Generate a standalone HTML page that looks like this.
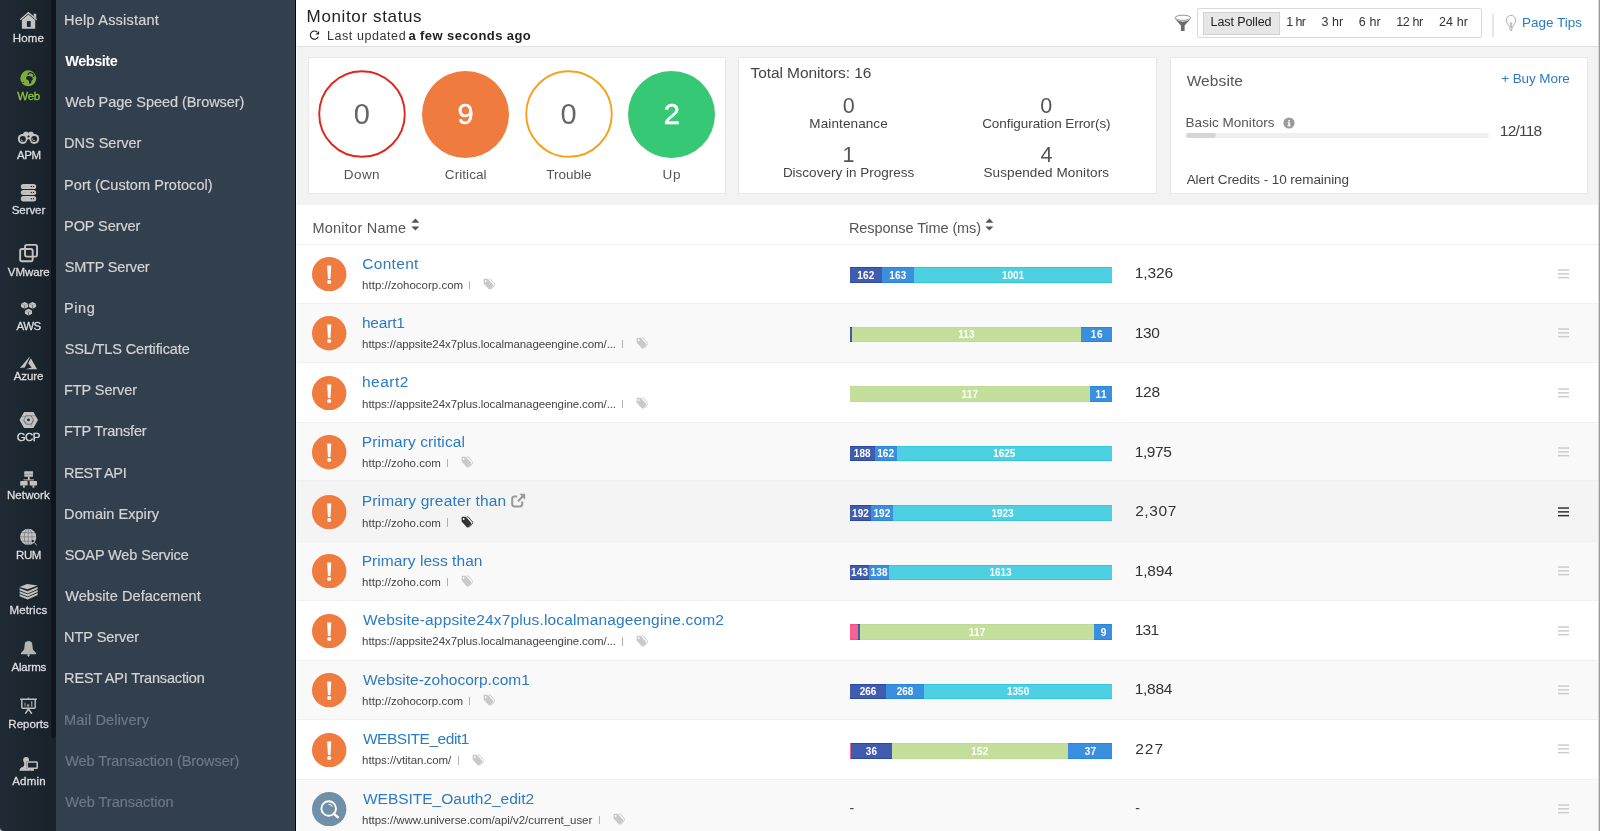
<!DOCTYPE html>
<html lang="en">
<head>
<meta charset="utf-8">
<title>Monitor status</title>
<style>
*{box-sizing:border-box;margin:0;padding:0}
html,body{width:1600px;height:831px;overflow:hidden;background:#f2f2f2}
body{font-family:"Liberation Sans",sans-serif;color:#444;position:relative}
.abs{position:absolute}
.t{position:absolute;white-space:nowrap;line-height:1}
#bar{will-change:transform;position:absolute;left:0;top:0;width:56px;height:831px;background:linear-gradient(90deg,#212b35 0,#1c262f 45%,#19222a 100%);overflow:hidden}
#bar .scroll{position:absolute;left:50.5px;top:0;width:5.5px;height:738px;background:#0f151a;border-radius:0 0 3px 3px}
#nav{will-change:transform;position:absolute;left:56px;top:0;width:240px;height:831px;background:#323f4c;overflow:hidden;border-right:1px solid #000}
#nav:after{content:'';position:absolute;left:238px;top:0;width:1px;height:831px;background:#384858}
#main{will-change:transform;position:absolute;left:296px;top:0;width:1304px;height:831px;background:#f3f3f3;overflow:hidden}
#lb{position:absolute;left:296px;top:0;width:1px;height:831px;background:#fbfbfb}
#corner{position:absolute;left:0;top:827px;width:4px;height:4px;background:radial-gradient(circle at 100% 0,rgba(190,190,190,0) 3.600px,#b8b8b8 4.600px)}
#hdr{position:absolute;left:0;top:0;width:1304px;height:47px;background:#fff;border-bottom:1px solid #e2e1e1}
.card{position:absolute;background:#fff;border:1px solid #e8e8e8;top:57px;height:137px}
#tbl{position:absolute;left:0;top:205px;width:1303px;height:626px;background:#fff}
.row{position:absolute;left:0;width:1303px;border-top:1px solid #f0f0f0}
.row.alt{background:#f9f9f9}
.row.hov{background:#f4f4f4;border-top-color:#f1f1f1;margin-top:-1px;padding-bottom:1px;box-sizing:content-box}
#edge{position:absolute;left:1598px;top:0;width:2px;height:831px;background:linear-gradient(90deg,#d9d9d9 0,#d9d9d9 50%,#9b9b9b 50%)}
</style>
</head>
<body>
<div id="bar">
<div class="scroll"></div>
<svg class="abs" style="left:0;top:0" width="56" height="831" viewBox="0 0 56 831" fill="#c2c2c2" stroke="none">
<g><path d="M20.300 19.800 L28.400 12.700 L36.700 19.800" fill="none" stroke="#c2c2c2" stroke-width="1.300"/><path d="M33.600 13.800h2.600v4.600l-2.600-2.300z"/><path d="M21.900 20.100 L28.400 14.400 L35.200 20.100 V28.800 H21.900 Z"/><rect x="26.900" y="21.100" width="3.800" height="5.800" fill="#1c262f"/></g>
<g><circle cx="28.300" cy="78.300" r="8" fill="#7dad3b"/><path fill="#1c262f" d="M26.100 77.600c.4-1 1.500-1.600 2.800-1.500l2.300.3 1.500 1.300.2 1.700-1.300 1.200-.4 1.900-1.100 1.500-.900-.400-.200-2.100-.800-1.500-1.700-.500z"/><path fill="none" stroke="#1c262f" stroke-width="1.100" d="M27.700 74.800c.7-1.500 2-2.400 3.500-2.400M31.300 72.700l2 1.300.9 1.800-1.100 1"/><circle cx="23.200" cy="82.400" r="0.700" fill="#1c262f"/></g>
<g><path d="M24.600 131.800h2.700l1.200 1 1.200-1h2.700l2.800 3.500v4h-13.400v-4z"/><circle cx="22.800" cy="138.900" r="5"/><circle cx="34.200" cy="138.900" r="5"/><circle cx="22.800" cy="138.900" r="3" fill="#1c262f"/><circle cx="34.200" cy="138.900" r="3" fill="#1c262f"/><path d="M20.900 139.300a2 2 0 0 0 2.300 1.700M32.300 138.300a2 2 0 0 0 2.800 2.200" fill="none" stroke="#c2c2c2" stroke-width=".8"/><path d="M26.500 141.600l2-2.600 2 2.600v2.800h-4z" fill="#1c262f"/><circle cx="28.450" cy="136.500" r="1.100" fill="#1c262f"/></g>
<rect x="20.800" y="183.9" width="15.400" height="5.2" rx="2.600"/><circle cx="33.500" cy="186.50" r="0.700" fill="#1c262f"/><circle cx="31.300" cy="186.50" r="0.700" fill="#1c262f"/><rect x="22.400" y="186.15" width="3.700" height="0.700" fill="#aeaeae"/>
<rect x="20.800" y="190.0" width="15.400" height="5.0" rx="2.600"/><circle cx="33.500" cy="192.50" r="0.700" fill="#1c262f"/><circle cx="31.300" cy="192.50" r="0.700" fill="#1c262f"/><rect x="22.400" y="192.15" width="3.700" height="0.700" fill="#aeaeae"/>
<rect x="20.800" y="196.0" width="15.400" height="5.4" rx="2.600"/><circle cx="33.500" cy="198.70" r="0.700" fill="#1c262f"/><circle cx="31.300" cy="198.70" r="0.700" fill="#1c262f"/><rect x="22.400" y="198.35" width="3.700" height="0.700" fill="#aeaeae"/>
<g fill="none" stroke="#c2c2c2" stroke-width="1.900"><rect x="25.050" y="244.850" width="12" height="11.800" rx="1.800"/><rect x="20.150" y="249.050" width="12.500" height="12.200" rx="1.800"/></g>
<g><path d="M24.6 302.10l3.55 1.6v3.4l-3.55 1.6l-3.55 -1.6v-3.4z"/><path d="M24.6 305.30v3.4" fill="none" stroke="#1c262f" stroke-width="0.600" opacity=".8"/><path d="M21.05 303.70l3.55 1.6l3.55 -1.6" fill="none" stroke="#1c262f" stroke-width="0.500" opacity=".45"/><path d="M32.5 302.10l3.55 1.6v3.4l-3.55 1.6l-3.55 -1.6v-3.4z"/><path d="M32.5 305.30v3.4" fill="none" stroke="#1c262f" stroke-width="0.600" opacity=".8"/><path d="M28.95 303.70l3.55 1.6l3.55 -1.6" fill="none" stroke="#1c262f" stroke-width="0.500" opacity=".45"/><path d="M28.5 308.80l3.55 1.6v3.4l-3.55 1.6l-3.55 -1.6v-3.4z"/><path d="M28.5 312.00v3.4" fill="none" stroke="#1c262f" stroke-width="0.600" opacity=".8"/><path d="M24.95 310.40l3.55 1.6l3.55 -1.6" fill="none" stroke="#1c262f" stroke-width="0.500" opacity=".45"/></g>
<g><path d="M30 356.200 L19.900 368 L24.800 367.400 L29 359 Z"/><path d="M30.900 358.200 L37.100 369.300 L25.500 369.300 L31.600 367.600 L28.200 363.200 Z"/></g>
<g><path d="M19.500 420 L24.100 411.900 H33.400 L38 420 L33.400 428.100 H24.100 Z"/><path d="M23.800 420 L26.200 415.800 H31.100 L33.500 420 L31.100 424.200 H26.200 Z" fill="none" stroke="#1c262f" stroke-width="0.600" opacity=".8"/><path d="M26.200 415.800L22 417M31.100 415.800h5M33.500 420l-2.500 6.500M26.200 424.200l-3.200-4" stroke="#1c262f" stroke-width="0.500" opacity=".6"/><circle cx="28.500" cy="419.900" r="1.400" fill="#1c262f"/></g>
<g><rect x="24.250" y="471.200" width="8.800" height="5.500" rx="0.600"/><rect x="24.250" y="473.900" width="8.800" height="0.500" fill="#1c262f" opacity=".6"/><rect x="27.900" y="476.600" width="1.800" height="3.200"/><rect x="23.500" y="479.400" width="10.400" height="1"/><rect x="20.200" y="480.900" width="7.400" height="4.700" rx="0.600"/><rect x="29.700" y="480.900" width="7.300" height="4.700" rx="0.600"/><rect x="23" y="485.500" width="1.800" height="2.200"/><rect x="32.500" y="485.500" width="1.800" height="2.200"/></g>
<g><circle cx="28.200" cy="536.900" r="8.100"/><g fill="none" stroke="#1c262f" stroke-width="0.600" opacity=".55"><ellipse cx="28.200" cy="536.900" rx="3.900" ry="8.100"/><path d="M28.200 528.800v16.200M20.100 536.900h16.200M21.500 532.600h13.400M21.500 541.200h13.400"/></g><circle cx="32.700" cy="541" r="1.700" fill="#1c262f" stroke="#c2c2c2" stroke-width="0.900"/><path d="M34.200 542.600l2.600 2.600" stroke="#c2c2c2" stroke-width="1" fill="none"/></g>
<g><path d="M19.600 586.900 L27 583.900 L37.700 585.500 L27.600 589.200 Z"/><path d="M19.600 588.2 L27.600 591.3 L37.700 587.1 L37.700 589.1 L27.600 593.4 L19.600 590.2 Z"/><path d="M19.600 591.2 L27.600 594.3 L37.700 590.1 L37.700 592.1 L27.600 596.4 L19.600 593.2 Z"/><path d="M19.600 594.2 L27.600 597.3 L37.700 593.1 L37.700 595.1 L27.600 599.4 L19.600 596.2 Z"/></g>
<g><path d="M28.600 641c1.800 0 3.400.9 3.600 2.600l.5 4.600c.2 1.700 1.300 2.600 3.400 4.700v1.400H20.900v-1.400c2.100-2.100 3.200-3 3.400-4.700l.5-4.600c.2-1.700 1.800-2.600 3.800-2.600z" fill="#b4b4b4"/><path d="M26.700 654.600h3.500l-1.750 2.300z"/></g>
<g><rect x="20.200" y="698.500" width="16.600" height="1.500"/><rect x="27.700" y="697.700" width="1.400" height="1"/><path d="M21.800 699.800v7.400c0 .7.500 1.100 1.100 1.100h11.200c.6 0 1.100-.4 1.100-1.100v-7.400" fill="none" stroke="#c2c2c2" stroke-width="1.400"/><rect x="24.400" y="702.600" width="1.300" height="4" opacity=".6"/><rect x="27" y="704.400" width="2.200" height="2.300" opacity=".8"/><rect x="31" y="701.300" width="1.400" height="5.400" opacity=".7"/><path d="M28.400 709l-3.100 4.700M28.400 709l3.400 4.700" stroke="#c2c2c2" stroke-width="1.500" fill="none"/></g>
<g><ellipse cx="26.100" cy="760" rx="2.900" ry="3.100"/><path d="M24.200 761.500h3.800v3.500c0 1 .8 1.700 2.200 2.200v3.600H19.500c0-2.200 1.300-3.300 3.100-3.900 1.200-.4 1.600-1 1.600-1.900z"/><rect x="26.400" y="761.200" width="11.600" height="7.800" rx="1" fill="#1c262f"/><rect x="27.150" y="761.950" width="10.100" height="6.300" rx="0.800" fill="none" stroke="#c2c2c2" stroke-width="1.500"/><rect x="30.200" y="768.800" width="3.700" height="2"/></g>
</svg>
<div class="t" style="left:12.76px;top:33px;font-size:11.5px;letter-spacing:0.126px;color:#dcdee0;-webkit-text-stroke:0.3px #dcdee0">Home</div>
<div class="t" style="left:17.25px;top:91px;font-size:11.5px;letter-spacing:-0.260px;color:#8cc540;-webkit-text-stroke:0.3px #8cc540">Web</div>
<div class="t" style="left:16.98px;top:150px;font-size:11.5px;letter-spacing:-0.377px;color:#dcdee0;-webkit-text-stroke:0.3px #dcdee0">APM</div>
<div class="t" style="left:11.78px;top:205px;font-size:11.5px;letter-spacing:-0.073px;color:#dcdee0;-webkit-text-stroke:0.3px #dcdee0">Server</div>
<div class="t" style="left:7.85px;top:267px;font-size:11.5px;letter-spacing:-0.084px;color:#dcdee0;-webkit-text-stroke:0.3px #dcdee0">VMware</div>
<div class="t" style="left:16.58px;top:321px;font-size:11.5px;letter-spacing:-0.575px;color:#dcdee0;-webkit-text-stroke:0.3px #dcdee0">AWS</div>
<div class="t" style="left:13.68px;top:371px;font-size:11.5px;letter-spacing:-0.052px;color:#dcdee0;-webkit-text-stroke:0.3px #dcdee0">Azure</div>
<div class="t" style="left:16.73px;top:432px;font-size:11.5px;letter-spacing:-0.575px;color:#dcdee0;-webkit-text-stroke:0.3px #dcdee0">GCP</div>
<div class="t" style="left:6.96px;top:490px;font-size:11.5px;letter-spacing:0.106px;color:#dcdee0;-webkit-text-stroke:0.3px #dcdee0">Network</div>
<div class="t" style="left:16.06px;top:550px;font-size:11.5px;letter-spacing:-0.450px;color:#dcdee0;-webkit-text-stroke:0.3px #dcdee0">RUM</div>
<div class="t" style="left:9.46px;top:605px;font-size:11.5px;letter-spacing:0.134px;color:#dcdee0;-webkit-text-stroke:0.3px #dcdee0">Metrics</div>
<div class="t" style="left:11.48px;top:662px;font-size:11.5px;letter-spacing:-0.188px;color:#dcdee0;-webkit-text-stroke:0.3px #dcdee0">Alarms</div>
<div class="t" style="left:8.36px;top:719px;font-size:11.5px;letter-spacing:0.016px;color:#dcdee0;-webkit-text-stroke:0.3px #dcdee0">Reports</div>
<div class="t" style="left:12.18px;top:776px;font-size:11.5px;letter-spacing:0.217px;color:#dcdee0;-webkit-text-stroke:0.3px #dcdee0">Admin</div>
</div>
<div id="nav">
<div class="t" style="left:8.11px;top:13px;font-size:14.5px;letter-spacing:0.216px;color:#d3d4d5;-webkit-text-stroke:0.2px #d3d4d5">Help Assistant</div>
<div class="t" style="left:9.29px;top:54px;font-size:14.5px;letter-spacing:-0.471px;color:#ffffff;font-weight:bold">Website</div>
<div class="t" style="left:9.24px;top:95px;font-size:14.5px;letter-spacing:-0.048px;color:#d3d4d5;-webkit-text-stroke:0.2px #d3d4d5">Web Page Speed (Browser)</div>
<div class="t" style="left:8.11px;top:136px;font-size:14.5px;letter-spacing:-0.015px;color:#d3d4d5;-webkit-text-stroke:0.2px #d3d4d5">DNS Server</div>
<div class="t" style="left:8.11px;top:178px;font-size:14.5px;letter-spacing:0.049px;color:#d3d4d5;-webkit-text-stroke:0.2px #d3d4d5">Port (Custom Protocol)</div>
<div class="t" style="left:8.11px;top:219px;font-size:14.5px;letter-spacing:-0.097px;color:#d3d4d5;-webkit-text-stroke:0.2px #d3d4d5">POP Server</div>
<div class="t" style="left:8.65px;top:260px;font-size:14.5px;letter-spacing:-0.177px;color:#d3d4d5;-webkit-text-stroke:0.2px #d3d4d5">SMTP Server</div>
<div class="t" style="left:8.11px;top:301px;font-size:14.5px;letter-spacing:0.534px;color:#d3d4d5;-webkit-text-stroke:0.2px #d3d4d5">Ping</div>
<div class="t" style="left:8.65px;top:342px;font-size:14.5px;letter-spacing:-0.124px;color:#d3d4d5;-webkit-text-stroke:0.2px #d3d4d5">SSL/TLS Certificate</div>
<div class="t" style="left:8.11px;top:383px;font-size:14.5px;letter-spacing:-0.105px;color:#d3d4d5;-webkit-text-stroke:0.2px #d3d4d5">FTP Server</div>
<div class="t" style="left:8.11px;top:424px;font-size:14.5px;letter-spacing:-0.165px;color:#d3d4d5;-webkit-text-stroke:0.2px #d3d4d5">FTP Transfer</div>
<div class="t" style="left:8.11px;top:466px;font-size:14.5px;letter-spacing:-0.342px;color:#d3d4d5;-webkit-text-stroke:0.2px #d3d4d5">REST API</div>
<div class="t" style="left:8.11px;top:507px;font-size:14.5px;letter-spacing:0.053px;color:#d3d4d5;-webkit-text-stroke:0.2px #d3d4d5">Domain Expiry</div>
<div class="t" style="left:8.65px;top:548px;font-size:14.5px;letter-spacing:-0.127px;color:#d3d4d5;-webkit-text-stroke:0.2px #d3d4d5">SOAP Web Service</div>
<div class="t" style="left:9.24px;top:589px;font-size:14.5px;letter-spacing:0.072px;color:#d3d4d5;-webkit-text-stroke:0.2px #d3d4d5">Website Defacement</div>
<div class="t" style="left:8.11px;top:630px;font-size:14.5px;letter-spacing:-0.061px;color:#d3d4d5;-webkit-text-stroke:0.2px #d3d4d5">NTP Server</div>
<div class="t" style="left:8.11px;top:671px;font-size:14.5px;letter-spacing:-0.178px;color:#d3d4d5;-webkit-text-stroke:0.2px #d3d4d5">REST API Transaction</div>
<div class="t" style="left:8.11px;top:713px;font-size:14.5px;letter-spacing:0.153px;color:#6c7885;-webkit-text-stroke:0.2px #6c7885">Mail Delivery</div>
<div class="t" style="left:9.24px;top:754px;font-size:14.5px;letter-spacing:-0.056px;color:#6c7885;-webkit-text-stroke:0.2px #6c7885">Web Transaction (Browser)</div>
<div class="t" style="left:9.24px;top:795px;font-size:14.5px;letter-spacing:-0.010px;color:#6c7885;-webkit-text-stroke:0.2px #6c7885">Web Transaction</div>
</div>
<div id="main">
<div id="hdr">
<div class="t" style="left:10.61px;top:8px;font-size:17px;letter-spacing:0.634px;color:#222">Monitor status</div>
<svg class="abs" style="left:12px;top:29px" width="13" height="12" viewBox="308 29 13 12"><path d="M318.300 36.600a4.100 4.100 0 1 1-1.100-4.600" fill="none" stroke="#222" stroke-width="1.150"/><path d="M319.100 30.900v3.700h-3.600z" fill="#222"/></svg>
<div class="t" style="left:30.98px;top:30px;font-size:12.5px;letter-spacing:0.576px;color:#333">Last updated</div>
<div class="t" style="left:112.42px;top:29px;font-size:13px;letter-spacing:0.424px;color:#222;font-weight:bold">a few seconds ago</div>
<svg class="abs" style="left:877px;top:13px" width="20" height="20" viewBox="1173 13 20 20"><path d="M1175 18.800 Q1179 21.800 1182.900 21.800 Q1187 21.800 1190.800 18.800 L1184.600 25.600 V30.900 H1180.900 V25.600 Z" fill="#6b6b6b"/><ellipse cx="1182.900" cy="17.800" rx="7.800" ry="2.600" fill="#fff" stroke="#8a8a8a" stroke-width="0.900"/></svg>
<div class="abs" style="left:901px;top:8px;width:284.500px;height:30px;border:1px solid #dadada;border-radius:2px;background:#fff"></div>
<div class="abs" style="left:907px;top:11.500px;width:77px;height:23px;border:1px solid #d2d2d2;background:#e7e7e7"></div>
<div class="t" style="left:914.57px;top:16px;font-size:12.5px;letter-spacing:-0.092px;color:#222">Last Polled</div>
<div class="t" style="left:990.25px;top:16px;font-size:12.5px;letter-spacing:-0.625px;color:#333">1 hr</div>
<div class="t" style="left:1025.53px;top:16px;font-size:12.5px;letter-spacing:0.046px;color:#333">3 hr</div>
<div class="t" style="left:1062.78px;top:16px;font-size:12.5px;letter-spacing:0.096px;color:#333">6 hr</div>
<div class="t" style="left:1100.25px;top:16px;font-size:12.5px;letter-spacing:-0.409px;color:#333">12 hr</div>
<div class="t" style="left:1142.88px;top:16px;font-size:12.5px;letter-spacing:0.134px;color:#333">24 hr</div>
<div class="abs" style="left:1196.300px;top:14px;width:1.400px;height:23px;background:#e6e6e6"></div>
<svg class="abs" style="left:1208px;top:13px" width="14" height="19" viewBox="1504 13 14 19" fill="none" stroke="#a6a6a6" stroke-width="0.900"><path d="M1509.200 26.600c-.3-1.700-2.900-3.200-2.900-6.500a4.700 4.700 0 0 1 9.400 0c0 3.300-2.600 4.800-2.900 6.500z"/><path d="M1509.200 27.900h3.600M1509.400 29.200h3.200M1510 30.400h2"/><path d="M1509.700 22.700h2.600M1510.300 22.900l.7 3.600 .7-3.600" stroke-width=".700"/></svg>
<div class="t" style="left:1226.09px;top:16px;font-size:13.5px;letter-spacing:-0.018px;color:#2b7bc4">Page Tips</div>
</div>
<div class="card" style="left:12px;width:418px"></div>
<div class="card" style="left:442px;width:419px"></div>
<div class="card" style="left:873.500px;width:418.500px"></div>
<svg class="abs" style="left:21.8px;top:70.1px" width="88" height="88" viewBox="0 0 88 88"><circle cx="44" cy="44" r="42.800" fill="#fff" stroke="#e0261c" stroke-width="1.900"/></svg>
<div class="t" style="left:57.72px;top:100px;font-size:29px;color:#666">0</div>
<div class="t" style="left:47.74px;top:168px;font-size:13.5px;letter-spacing:0.451px;color:#555">Down</div>
<div class="abs" style="left:126.0px;top:70.5px;width:87.2px;height:87.2px;border-radius:50%;background:#f07b3f"></div>
<div class="t" style="left:161.55px;top:100px;font-size:29px;color:#fff;-webkit-text-stroke:0.5px #fff">9</div>
<div class="t" style="left:148.83px;top:168px;font-size:13.5px;letter-spacing:0.073px;color:#555">Critical</div>
<svg class="abs" style="left:228.7px;top:70.1px" width="88" height="88" viewBox="0 0 88 88"><circle cx="44" cy="44" r="42.800" fill="#fff" stroke="#f5a11a" stroke-width="1.900"/></svg>
<div class="t" style="left:264.62px;top:100px;font-size:29px;color:#666">0</div>
<div class="t" style="left:250.25px;top:168px;font-size:13.5px;letter-spacing:-0.012px;color:#555">Trouble</div>
<div class="abs" style="left:332.2px;top:70.5px;width:87.2px;height:87.2px;border-radius:50%;background:#37c875"></div>
<div class="t" style="left:367.74px;top:100px;font-size:29px;color:#fff;-webkit-text-stroke:0.5px #fff">2</div>
<div class="t" style="left:366.56px;top:168px;font-size:13.5px;letter-spacing:0.740px;color:#555">Up</div>
<div class="t" style="left:454.56px;top:65px;font-size:15.5px;letter-spacing:-0.089px;color:#444">Total Monitors: 16</div>
<div class="t" style="left:546.81px;top:96px;font-size:21.5px;color:#555">0</div>
<div class="t" style="left:513.34px;top:117px;font-size:13.5px;letter-spacing:0.110px;color:#444">Maintenance</div>
<div class="t" style="left:744.31px;top:96px;font-size:21.5px;color:#555">0</div>
<div class="t" style="left:686.17px;top:117px;font-size:13.5px;letter-spacing:-0.066px;color:#444">Configuration Error(s)</div>
<div class="t" style="left:546.52px;top:145px;font-size:21.5px;color:#555">1</div>
<div class="t" style="left:486.89px;top:166px;font-size:13.5px;color:#444">Discovery in Progress</div>
<div class="t" style="left:744.40px;top:145px;font-size:21.5px;color:#555">4</div>
<div class="t" style="left:687.49px;top:166px;font-size:13.5px;letter-spacing:0.098px;color:#444">Suspended Monitors</div>
<div class="t" style="left:890.64px;top:73px;font-size:15.5px;letter-spacing:0.106px;color:#555">Website</div>
<div class="t" style="left:1205.25px;top:72px;font-size:13.5px;letter-spacing:-0.096px;color:#2b7bc4">+ Buy More</div>
<div class="t" style="left:889.59px;top:116px;font-size:13.5px;letter-spacing:0.028px;color:#555">Basic Monitors</div>
<svg class="abs" style="left:986.800px;top:116.600px" width="12" height="12" viewBox="0 0 12 12"><circle cx="6" cy="6" r="5.600" fill="#9a9a9a"/><path d="M5.300 3h1.600v1.500h-1.600zM4.700 5.300h2.200v3h.7v1h-3.200v-1h.8v-2h-.5z" fill="#fff"/></svg>
<div class="abs" style="left:890.300px;top:132.700px;width:302.400px;height:5.400px;border-radius:3px;background:#f0f0f0"></div>
<div class="abs" style="left:890.300px;top:132.700px;width:30.200px;height:5.400px;border-radius:3px;background:#d6d6d6"></div>
<div class="t" style="left:1203.82px;top:123px;font-size:15.5px;letter-spacing:-0.775px;color:#444">12/118</div>
<div class="t" style="left:890.67px;top:173px;font-size:13.5px;letter-spacing:-0.071px;color:#444">Alert Credits - 10 remaining</div>
<div id="tbl">
<div class="t" style="left:16.41px;top:16px;font-size:14.5px;letter-spacing:0.242px;color:#555">Monitor Name</div>
<svg class="abs" style="left:114.5px;top:12.800px" width="9" height="13" viewBox="0 0 9 13" fill="#555"><path d="M4.400 .400l4 4.300h-8zM.400 8.400h8l-4 4.200z"/></svg>
<div class="t" style="left:552.91px;top:16px;font-size:14.5px;letter-spacing:-0.093px;color:#555">Response Time (ms)</div>
<svg class="abs" style="left:688.9px;top:12.800px" width="9" height="13" viewBox="0 0 9 13" fill="#555"><path d="M4.400 .400l4 4.300h-8zM.400 8.400h8l-4 4.200z"/></svg>
<div class="row" style="top:39px;height:59px"></div>
<svg class="abs" style="left:16.2px;top:51.9px" width="34.4" height="34.4" viewBox="0 0 34.4 34.400"><circle cx="17.200" cy="17.200" r="17.200" fill="#f07b3f"/><path d="M15.100 8.400h4.200l-.85 13.600h-2.500z" fill="#fff"/><ellipse cx="17.200" cy="24.900" rx="2.100" ry="2" fill="#fff"/></svg>
<div class="t" style="left:66.22px;top:51px;font-size:15.5px;letter-spacing:0.315px;color:#2b7bc4">Content</div>
<div class="t" style="left:66.11px;top:75px;font-size:11.5px;color:#444">http://zohocorp.com</div>
<div class="abs" style="left:173.1px;top:75.6px;width:1.200px;height:8.400px;background:#b2b2b2"></div>
<svg class="abs" style="left:187.3px;top:73.0px" width="12" height="13.600" viewBox="0 0 12 13" preserveAspectRatio="none"><path d="M.6 1.800c0-.6.400-1 1-1h3.200l5.300 5.600c.4.400.4 1 0 1.400l-2.900 3c-.4.400-1 .4-1.400 0l-5.200-5.600z" fill="#c9c9c9"/><circle cx="2.700" cy="2.900" r="0.900" fill="#fff"/><path d="M6.200.800h.9l4.500 4.900c.4.400.4 1 0 1.400l-3.600 3.800" fill="none" stroke="#c9c9c9" stroke-width="0.900"/></svg>
<div class="abs" style="left:553.9px;top:62.4px;width:31.9px;height:15.6px;background:#3f5cae;border-top:1px solid #2a49a6;border-bottom:1px solid #2a49a6"></div>
<div class="abs" style="left:585.8px;top:62.4px;width:32.1px;height:15.6px;background:#3a90de;border-top:1px solid #2486de;border-bottom:1px solid #2486de"></div>
<div class="abs" style="left:617.9px;top:62.4px;width:198.5px;height:15.6px;background:#4dd0e1;border-top:1px solid #35c9dd;border-bottom:1px solid #35c9dd"></div>
<div class="t" style="left:561.24px;top:66px;font-size:10px;letter-spacing:0.157px;color:#fff;font-weight:bold">162</div>
<div class="t" style="left:593.24px;top:66px;font-size:10px;letter-spacing:0.137px;color:#fff;font-weight:bold">163</div>
<div class="t" style="left:705.93px;top:66px;font-size:10px;letter-spacing:-0.051px;color:#fff;font-weight:bold">1001</div>
<div class="t" style="left:838.72px;top:60px;font-size:15.5px;letter-spacing:-0.109px;color:#333">1,326</div>
<svg class="abs" style="left:1262.1px;top:63.8px" width="11" height="10" viewBox="0 0 11 10" fill="#cdcdcd"><rect x="0" y="0.300" width="11" height="1.500"/><rect x="0" y="4.100" width="11" height="1.500"/><rect x="0" y="7.900" width="11" height="1.500"/></svg>
<div class="row alt" style="top:98px;height:59px"></div>
<svg class="abs" style="left:16.2px;top:111.4px" width="34.4" height="34.4" viewBox="0 0 34.4 34.400"><circle cx="17.200" cy="17.200" r="17.200" fill="#f07b3f"/><path d="M15.100 8.400h4.200l-.85 13.600h-2.500z" fill="#fff"/><ellipse cx="17.200" cy="24.900" rx="2.100" ry="2" fill="#fff"/></svg>
<div class="t" style="left:65.93px;top:110px;font-size:15.5px;letter-spacing:-0.186px;color:#2b7bc4">heart1</div>
<div class="t" style="left:66.11px;top:134px;font-size:11.5px;letter-spacing:-0.090px;color:#444">https://appsite24x7plus.localmanageengine.com/...</div>
<div class="abs" style="left:325.8px;top:135.1px;width:1.200px;height:8.400px;background:#b2b2b2"></div>
<svg class="abs" style="left:340.0px;top:132.4px" width="12" height="13.600" viewBox="0 0 12 13" preserveAspectRatio="none"><path d="M.6 1.800c0-.6.400-1 1-1h3.200l5.300 5.600c.4.400.4 1 0 1.400l-2.900 3c-.4.400-1 .4-1.400 0l-5.200-5.600z" fill="#c9c9c9"/><circle cx="2.700" cy="2.900" r="0.900" fill="#fff"/><path d="M6.200.800h.9l4.500 4.900c.4.400.4 1 0 1.400l-3.600 3.800" fill="none" stroke="#c9c9c9" stroke-width="0.900"/></svg>
<div class="abs" style="left:553.9px;top:121.8px;width:2.0px;height:15.6px;background:#3f5cae;border-top:1px solid #2a49a6;border-bottom:1px solid #2a49a6"></div>
<div class="abs" style="left:555.9px;top:121.8px;width:229.2px;height:15.6px;background:#c4de9c;border-top:1px solid #bedb93;border-bottom:1px solid #bedb93"></div>
<div class="abs" style="left:785.1px;top:121.8px;width:31.3px;height:15.6px;background:#3a90de;border-top:1px solid #2486de;border-bottom:1px solid #2486de"></div>
<div class="t" style="left:662.16px;top:125px;font-size:10px;letter-spacing:0.136px;color:#fff;font-weight:bold">113</div>
<div class="t" style="left:794.74px;top:125px;font-size:10px;letter-spacing:0.623px;color:#fff;font-weight:bold">16</div>
<div class="t" style="left:838.72px;top:120px;font-size:15.5px;letter-spacing:-0.293px;color:#333">130</div>
<svg class="abs" style="left:1262.1px;top:123.2px" width="11" height="10" viewBox="0 0 11 10" fill="#cdcdcd"><rect x="0" y="0.300" width="11" height="1.500"/><rect x="0" y="4.100" width="11" height="1.500"/><rect x="0" y="7.900" width="11" height="1.500"/></svg>
<div class="row" style="top:157px;height:60px"></div>
<svg class="abs" style="left:16.2px;top:170.8px" width="34.4" height="34.4" viewBox="0 0 34.4 34.400"><circle cx="17.200" cy="17.200" r="17.200" fill="#f07b3f"/><path d="M15.100 8.400h4.200l-.85 13.600h-2.500z" fill="#fff"/><ellipse cx="17.200" cy="24.900" rx="2.100" ry="2" fill="#fff"/></svg>
<div class="t" style="left:65.93px;top:169px;font-size:15.5px;letter-spacing:0.500px;color:#2b7bc4">heart2</div>
<div class="t" style="left:66.11px;top:194px;font-size:11.5px;letter-spacing:-0.090px;color:#444">https://appsite24x7plus.localmanageengine.com/...</div>
<div class="abs" style="left:325.8px;top:194.5px;width:1.200px;height:8.400px;background:#b2b2b2"></div>
<svg class="abs" style="left:340.0px;top:191.9px" width="12" height="13.600" viewBox="0 0 12 13" preserveAspectRatio="none"><path d="M.6 1.800c0-.6.400-1 1-1h3.200l5.300 5.600c.4.400.4 1 0 1.400l-2.900 3c-.4.400-1 .4-1.400 0l-5.200-5.600z" fill="#c9c9c9"/><circle cx="2.700" cy="2.900" r="0.900" fill="#fff"/><path d="M6.200.800h.9l4.500 4.900c.4.400.4 1 0 1.400l-3.600 3.800" fill="none" stroke="#c9c9c9" stroke-width="0.900"/></svg>
<div class="abs" style="left:553.9px;top:181.3px;width:240.0px;height:15.6px;background:#c4de9c;border-top:1px solid #bedb93;border-bottom:1px solid #bedb93"></div>
<div class="abs" style="left:793.9px;top:181.3px;width:22.5px;height:15.6px;background:#3a90de;border-top:1px solid #2486de;border-bottom:1px solid #2486de"></div>
<div class="t" style="left:665.56px;top:185px;font-size:10px;letter-spacing:0.176px;color:#fff;font-weight:bold">117</div>
<div class="t" style="left:799.42px;top:185px;font-size:10px;letter-spacing:0.541px;color:#fff;font-weight:bold">11</div>
<div class="t" style="left:838.72px;top:179px;font-size:15.5px;letter-spacing:-0.255px;color:#333">128</div>
<svg class="abs" style="left:1262.1px;top:182.7px" width="11" height="10" viewBox="0 0 11 10" fill="#cdcdcd"><rect x="0" y="0.300" width="11" height="1.500"/><rect x="0" y="4.100" width="11" height="1.500"/><rect x="0" y="7.900" width="11" height="1.500"/></svg>
<div class="row alt" style="top:217px;height:59px"></div>
<svg class="abs" style="left:16.2px;top:230.3px" width="34.4" height="34.4" viewBox="0 0 34.4 34.400"><circle cx="17.200" cy="17.200" r="17.200" fill="#f07b3f"/><path d="M15.100 8.400h4.200l-.85 13.600h-2.500z" fill="#fff"/><ellipse cx="17.200" cy="24.900" rx="2.100" ry="2" fill="#fff"/></svg>
<div class="t" style="left:65.73px;top:229px;font-size:15.5px;letter-spacing:0.105px;color:#2b7bc4">Primary critical</div>
<div class="t" style="left:66.11px;top:253px;font-size:11.5px;letter-spacing:0.015px;color:#444">http://zoho.com</div>
<div class="abs" style="left:151.0px;top:254.0px;width:1.200px;height:8.400px;background:#b2b2b2"></div>
<svg class="abs" style="left:165.2px;top:251.4px" width="12" height="13.600" viewBox="0 0 12 13" preserveAspectRatio="none"><path d="M.6 1.800c0-.6.400-1 1-1h3.200l5.300 5.600c.4.400.4 1 0 1.400l-2.900 3c-.4.400-1 .4-1.400 0l-5.200-5.600z" fill="#c9c9c9"/><circle cx="2.700" cy="2.900" r="0.900" fill="#fff"/><path d="M6.200.800h.9l4.500 4.900c.4.400.4 1 0 1.400l-3.600 3.800" fill="none" stroke="#c9c9c9" stroke-width="0.900"/></svg>
<div class="abs" style="left:553.9px;top:240.8px;width:24.9px;height:15.6px;background:#3f5cae;border-top:1px solid #2a49a6;border-bottom:1px solid #2a49a6"></div>
<div class="abs" style="left:578.8px;top:240.8px;width:21.9px;height:15.6px;background:#3a90de;border-top:1px solid #2486de;border-bottom:1px solid #2486de"></div>
<div class="abs" style="left:600.7px;top:240.8px;width:215.7px;height:15.6px;background:#4dd0e1;border-top:1px solid #35c9dd;border-bottom:1px solid #35c9dd"></div>
<div class="t" style="left:557.74px;top:244px;font-size:10px;letter-spacing:0.112px;color:#fff;font-weight:bold">188</div>
<div class="t" style="left:581.14px;top:244px;font-size:10px;letter-spacing:0.157px;color:#fff;font-weight:bold">162</div>
<div class="t" style="left:697.33px;top:244px;font-size:10px;letter-spacing:-0.051px;color:#fff;font-weight:bold">1625</div>
<div class="t" style="left:838.72px;top:239px;font-size:15.5px;letter-spacing:-0.392px;color:#333">1,975</div>
<svg class="abs" style="left:1262.1px;top:242.2px" width="11" height="10" viewBox="0 0 11 10" fill="#cdcdcd"><rect x="0" y="0.300" width="11" height="1.500"/><rect x="0" y="4.100" width="11" height="1.500"/><rect x="0" y="7.900" width="11" height="1.500"/></svg>
<div class="row hov" style="top:276px;height:60px"></div>
<svg class="abs" style="left:16.2px;top:289.7px" width="34.4" height="34.4" viewBox="0 0 34.4 34.400"><circle cx="17.200" cy="17.200" r="17.200" fill="#f07b3f"/><path d="M15.100 8.400h4.200l-.85 13.600h-2.500z" fill="#fff"/><ellipse cx="17.200" cy="24.900" rx="2.100" ry="2" fill="#fff"/></svg>
<div class="t" style="left:65.73px;top:288px;font-size:15.5px;letter-spacing:0.167px;color:#2b7bc4">Primary greater than</div>
<svg class="abs" style="left:215px;top:288.2px" width="15" height="15" viewBox="0 0 15 15" fill="none" stroke="#999" stroke-width="2"><path d="M11.200 8.600v2.400c0 1.400-1 2.400-2.400 2.400h-5.200c-1.400 0-2.400-1-2.400-2.400v-5.200c0-1.400 1-2.400 2.400-2.400h2.600"/><path d="M7 8.200l5.400-5.400" stroke-width="2.200"/><path d="M8.300 .800h5.900v5.900z" fill="#999" stroke="none"/></svg>
<div class="t" style="left:66.11px;top:313px;font-size:11.5px;letter-spacing:0.015px;color:#444">http://zoho.com</div>
<div class="abs" style="left:151.0px;top:313.4px;width:1.200px;height:8.400px;background:#b2b2b2"></div>
<svg class="abs" style="left:165.2px;top:310.8px" width="12" height="13.600" viewBox="0 0 12 13" preserveAspectRatio="none"><path d="M.6 1.800c0-.6.400-1 1-1h3.200l5.300 5.600c.4.400.4 1 0 1.400l-2.900 3c-.4.400-1 .4-1.400 0l-5.200-5.600z" fill="#333"/><circle cx="2.700" cy="2.900" r="0.900" fill="#fff"/><path d="M6.200.800h.9l4.500 4.900c.4.400.4 1 0 1.400l-3.600 3.800" fill="none" stroke="#333" stroke-width="0.900"/></svg>
<div class="abs" style="left:553.9px;top:300.2px;width:21.3px;height:15.6px;background:#3f5cae;border-top:1px solid #2a49a6;border-bottom:1px solid #2a49a6"></div>
<div class="abs" style="left:575.2px;top:300.2px;width:21.6px;height:15.6px;background:#3a90de;border-top:1px solid #2486de;border-bottom:1px solid #2486de"></div>
<div class="abs" style="left:596.8px;top:300.2px;width:219.6px;height:15.6px;background:#4dd0e1;border-top:1px solid #35c9dd;border-bottom:1px solid #35c9dd"></div>
<div class="t" style="left:555.94px;top:304px;font-size:10px;letter-spacing:0.157px;color:#fff;font-weight:bold">192</div>
<div class="t" style="left:577.39px;top:304px;font-size:10px;letter-spacing:0.157px;color:#fff;font-weight:bold">192</div>
<div class="t" style="left:695.38px;top:304px;font-size:10px;letter-spacing:-0.025px;color:#fff;font-weight:bold">1923</div>
<div class="t" style="left:839.13px;top:298px;font-size:15.5px;letter-spacing:0.592px;color:#333">2,307</div>
<svg class="abs" style="left:1262.1px;top:301.6px" width="11" height="10" viewBox="0 0 11 10" fill="#333"><rect x="0" y="0.300" width="11" height="1.500"/><rect x="0" y="4.100" width="11" height="1.500"/><rect x="0" y="7.900" width="11" height="1.500"/></svg>
<div class="row alt" style="top:336px;height:59px"></div>
<svg class="abs" style="left:16.2px;top:349.1px" width="34.4" height="34.4" viewBox="0 0 34.4 34.400"><circle cx="17.200" cy="17.200" r="17.200" fill="#f07b3f"/><path d="M15.100 8.400h4.200l-.85 13.600h-2.500z" fill="#fff"/><ellipse cx="17.200" cy="24.900" rx="2.100" ry="2" fill="#fff"/></svg>
<div class="t" style="left:65.73px;top:348px;font-size:15.5px;letter-spacing:0.064px;color:#2b7bc4">Primary less than</div>
<div class="t" style="left:66.11px;top:372px;font-size:11.5px;letter-spacing:0.015px;color:#444">http://zoho.com</div>
<div class="abs" style="left:151.0px;top:372.9px;width:1.200px;height:8.400px;background:#b2b2b2"></div>
<svg class="abs" style="left:165.2px;top:370.2px" width="12" height="13.600" viewBox="0 0 12 13" preserveAspectRatio="none"><path d="M.6 1.800c0-.6.400-1 1-1h3.200l5.300 5.600c.4.400.4 1 0 1.400l-2.900 3c-.4.400-1 .4-1.400 0l-5.200-5.600z" fill="#c9c9c9"/><circle cx="2.700" cy="2.900" r="0.900" fill="#fff"/><path d="M6.200.800h.9l4.500 4.900c.4.400.4 1 0 1.400l-3.600 3.800" fill="none" stroke="#c9c9c9" stroke-width="0.900"/></svg>
<div class="abs" style="left:553.9px;top:359.6px;width:19.4px;height:15.6px;background:#3f5cae;border-top:1px solid #2a49a6;border-bottom:1px solid #2a49a6"></div>
<div class="abs" style="left:573.3px;top:359.6px;width:19.7px;height:15.6px;background:#3a90de;border-top:1px solid #2486de;border-bottom:1px solid #2486de"></div>
<div class="abs" style="left:593.0px;top:359.6px;width:223.4px;height:15.6px;background:#4dd0e1;border-top:1px solid #35c9dd;border-bottom:1px solid #35c9dd"></div>
<div class="t" style="left:554.99px;top:363px;font-size:10px;letter-spacing:0.137px;color:#fff;font-weight:bold">143</div>
<div class="t" style="left:574.54px;top:363px;font-size:10px;letter-spacing:0.112px;color:#fff;font-weight:bold">138</div>
<div class="t" style="left:693.48px;top:363px;font-size:10px;letter-spacing:-0.025px;color:#fff;font-weight:bold">1613</div>
<div class="t" style="left:838.72px;top:358px;font-size:15.5px;letter-spacing:-0.163px;color:#333">1,894</div>
<svg class="abs" style="left:1262.1px;top:361.0px" width="11" height="10" viewBox="0 0 11 10" fill="#cdcdcd"><rect x="0" y="0.300" width="11" height="1.500"/><rect x="0" y="4.100" width="11" height="1.500"/><rect x="0" y="7.900" width="11" height="1.500"/></svg>
<div class="row" style="top:395px;height:60px"></div>
<svg class="abs" style="left:16.2px;top:408.6px" width="34.4" height="34.4" viewBox="0 0 34.4 34.400"><circle cx="17.200" cy="17.200" r="17.200" fill="#f07b3f"/><path d="M15.100 8.400h4.200l-.85 13.600h-2.500z" fill="#fff"/><ellipse cx="17.200" cy="24.900" rx="2.100" ry="2" fill="#fff"/></svg>
<div class="t" style="left:66.94px;top:407px;font-size:15.5px;letter-spacing:0.158px;color:#2b7bc4">Website-appsite24x7plus.localmanageengine.com2</div>
<div class="t" style="left:66.11px;top:431px;font-size:11.5px;letter-spacing:-0.090px;color:#444">https://appsite24x7plus.localmanageengine.com/...</div>
<div class="abs" style="left:325.8px;top:432.3px;width:1.200px;height:8.400px;background:#b2b2b2"></div>
<svg class="abs" style="left:340.0px;top:429.7px" width="12" height="13.600" viewBox="0 0 12 13" preserveAspectRatio="none"><path d="M.6 1.800c0-.6.400-1 1-1h3.200l5.300 5.600c.4.400.4 1 0 1.400l-2.900 3c-.4.400-1 .4-1.400 0l-5.200-5.600z" fill="#c9c9c9"/><circle cx="2.700" cy="2.900" r="0.900" fill="#fff"/><path d="M6.200.800h.9l4.500 4.900c.4.400.4 1 0 1.400l-3.600 3.800" fill="none" stroke="#c9c9c9" stroke-width="0.900"/></svg>
<div class="abs" style="left:553.9px;top:419.1px;width:8.1px;height:15.6px;background:#f7618f;border-top:1px solid #f5507f;border-bottom:1px solid #f5507f"></div>
<div class="abs" style="left:562.0px;top:419.1px;width:1.9px;height:15.6px;background:#3f5cae;border-top:1px solid #2a49a6;border-bottom:1px solid #2a49a6"></div>
<div class="abs" style="left:563.9px;top:419.1px;width:234.5px;height:15.6px;background:#c4de9c;border-top:1px solid #bedb93;border-bottom:1px solid #bedb93"></div>
<div class="abs" style="left:798.4px;top:419.1px;width:18.0px;height:15.6px;background:#3a90de;border-top:1px solid #2486de;border-bottom:1px solid #2486de"></div>
<div class="t" style="left:672.81px;top:423px;font-size:10px;letter-spacing:0.176px;color:#fff;font-weight:bold">117</div>
<div class="t" style="left:804.63px;top:423px;font-size:10px;color:#fff;font-weight:bold">9</div>
<div class="t" style="left:838.72px;top:417px;font-size:15.5px;letter-spacing:-0.775px;color:#333">131</div>
<svg class="abs" style="left:1262.1px;top:420.5px" width="11" height="10" viewBox="0 0 11 10" fill="#cdcdcd"><rect x="0" y="0.300" width="11" height="1.500"/><rect x="0" y="4.100" width="11" height="1.500"/><rect x="0" y="7.900" width="11" height="1.500"/></svg>
<div class="row alt" style="top:455px;height:59px"></div>
<svg class="abs" style="left:16.2px;top:468.1px" width="34.4" height="34.4" viewBox="0 0 34.4 34.400"><circle cx="17.200" cy="17.200" r="17.200" fill="#f07b3f"/><path d="M15.100 8.400h4.200l-.85 13.600h-2.500z" fill="#fff"/><ellipse cx="17.200" cy="24.900" rx="2.100" ry="2" fill="#fff"/></svg>
<div class="t" style="left:66.94px;top:467px;font-size:15.5px;color:#2b7bc4">Website-zohocorp.com1</div>
<div class="t" style="left:66.11px;top:491px;font-size:11.5px;color:#444">http://zohocorp.com</div>
<div class="abs" style="left:173.1px;top:491.8px;width:1.200px;height:8.400px;background:#b2b2b2"></div>
<svg class="abs" style="left:187.3px;top:489.2px" width="12" height="13.600" viewBox="0 0 12 13" preserveAspectRatio="none"><path d="M.6 1.800c0-.6.400-1 1-1h3.200l5.300 5.600c.4.400.4 1 0 1.400l-2.900 3c-.4.400-1 .4-1.400 0l-5.200-5.600z" fill="#c9c9c9"/><circle cx="2.700" cy="2.900" r="0.900" fill="#fff"/><path d="M6.200.800h.9l4.500 4.900c.4.400.4 1 0 1.400l-3.600 3.800" fill="none" stroke="#c9c9c9" stroke-width="0.900"/></svg>
<div class="abs" style="left:553.9px;top:478.6px;width:36.3px;height:15.6px;background:#3f5cae;border-top:1px solid #2a49a6;border-bottom:1px solid #2a49a6"></div>
<div class="abs" style="left:590.2px;top:478.6px;width:37.8px;height:15.6px;background:#3a90de;border-top:1px solid #2486de;border-bottom:1px solid #2486de"></div>
<div class="abs" style="left:628.0px;top:478.6px;width:188.4px;height:15.6px;background:#4dd0e1;border-top:1px solid #35c9dd;border-bottom:1px solid #35c9dd"></div>
<div class="t" style="left:563.72px;top:482px;font-size:10px;color:#fff;font-weight:bold">266</div>
<div class="t" style="left:600.77px;top:482px;font-size:10px;letter-spacing:-0.028px;color:#fff;font-weight:bold">268</div>
<div class="t" style="left:710.98px;top:482px;font-size:10px;letter-spacing:-0.008px;color:#fff;font-weight:bold">1350</div>
<div class="t" style="left:838.72px;top:476px;font-size:15.5px;letter-spacing:-0.263px;color:#333">1,884</div>
<svg class="abs" style="left:1262.1px;top:480.0px" width="11" height="10" viewBox="0 0 11 10" fill="#cdcdcd"><rect x="0" y="0.300" width="11" height="1.500"/><rect x="0" y="4.100" width="11" height="1.500"/><rect x="0" y="7.900" width="11" height="1.500"/></svg>
<div class="row" style="top:514px;height:60px"></div>
<svg class="abs" style="left:16.2px;top:527.5px" width="34.4" height="34.4" viewBox="0 0 34.4 34.400"><circle cx="17.200" cy="17.200" r="17.200" fill="#f07b3f"/><path d="M15.100 8.400h4.200l-.85 13.600h-2.500z" fill="#fff"/><ellipse cx="17.200" cy="24.900" rx="2.100" ry="2" fill="#fff"/></svg>
<div class="t" style="left:66.94px;top:526px;font-size:15.5px;letter-spacing:-0.465px;color:#2b7bc4">WEBSITE_edit1</div>
<div class="t" style="left:66.11px;top:550px;font-size:11.5px;letter-spacing:-0.052px;color:#444">https://vtitan.com/</div>
<div class="abs" style="left:162.1px;top:551.2px;width:1.200px;height:8.400px;background:#b2b2b2"></div>
<svg class="abs" style="left:176.3px;top:548.6px" width="12" height="13.600" viewBox="0 0 12 13" preserveAspectRatio="none"><path d="M.6 1.800c0-.6.400-1 1-1h3.200l5.300 5.600c.4.400.4 1 0 1.400l-2.900 3c-.4.400-1 .4-1.400 0l-5.200-5.600z" fill="#c9c9c9"/><circle cx="2.700" cy="2.900" r="0.900" fill="#fff"/><path d="M6.200.800h.9l4.500 4.900c.4.400.4 1 0 1.400l-3.600 3.800" fill="none" stroke="#c9c9c9" stroke-width="0.900"/></svg>
<div class="abs" style="left:553.9px;top:538.0px;width:0.9px;height:15.6px;background:#f7618f;border-top:1px solid #f5507f;border-bottom:1px solid #f5507f"></div>
<div class="abs" style="left:554.8px;top:538.0px;width:40.9px;height:15.6px;background:#3f5cae;border-top:1px solid #2a49a6;border-bottom:1px solid #2a49a6"></div>
<div class="abs" style="left:595.7px;top:538.0px;width:176.5px;height:15.6px;background:#c4de9c;border-top:1px solid #bedb93;border-bottom:1px solid #bedb93"></div>
<div class="abs" style="left:772.2px;top:538.0px;width:44.2px;height:15.6px;background:#3a90de;border-top:1px solid #2486de;border-bottom:1px solid #2486de"></div>
<div class="t" style="left:569.64px;top:542px;font-size:10px;letter-spacing:0.223px;color:#fff;font-weight:bold">36</div>
<div class="t" style="left:675.34px;top:542px;font-size:10px;letter-spacing:0.157px;color:#fff;font-weight:bold">152</div>
<div class="t" style="left:788.69px;top:542px;font-size:10px;letter-spacing:0.303px;color:#fff;font-weight:bold">37</div>
<div class="t" style="left:839.13px;top:536px;font-size:15.5px;letter-spacing:1.048px;color:#333">227</div>
<svg class="abs" style="left:1262.1px;top:539.4px" width="11" height="10" viewBox="0 0 11 10" fill="#cdcdcd"><rect x="0" y="0.300" width="11" height="1.500"/><rect x="0" y="4.100" width="11" height="1.500"/><rect x="0" y="7.900" width="11" height="1.500"/></svg>
<div class="row alt" style="top:574px;height:59px"></div>
<svg class="abs" style="left:16.2px;top:587.0px" width="34.4" height="34.4" viewBox="0 0 34.4 34.400"><circle cx="17.200" cy="17.200" r="17.200" fill="#7090a7"/><circle cx="16.700" cy="16.500" r="7.300" fill="none" stroke="#fff" stroke-width="1.900"/><path d="M21.800 21.900l4.200 3.400" stroke="#fff" stroke-width="2.400" stroke-linecap="round"/><path d="M16.900 12.300a4.200 4.200 0 0 1 3.200 2" stroke="#fff" stroke-width="1.100" fill="none" stroke-linecap="round"/></svg>
<div class="t" style="left:66.94px;top:586px;font-size:15.5px;letter-spacing:-0.011px;color:#2b7bc4">WEBSITE_Oauth2_edit2</div>
<div class="t" style="left:66.11px;top:610px;font-size:11.5px;letter-spacing:-0.043px;color:#444">https://www.universe.com/api/v2/current_user</div>
<div class="abs" style="left:302.9px;top:610.7px;width:1.200px;height:8.400px;background:#b2b2b2"></div>
<svg class="abs" style="left:317.1px;top:608.1px" width="12" height="13.600" viewBox="0 0 12 13" preserveAspectRatio="none"><path d="M.6 1.800c0-.6.400-1 1-1h3.200l5.300 5.600c.4.400.4 1 0 1.400l-2.900 3c-.4.400-1 .4-1.400 0l-5.200-5.600z" fill="#c9c9c9"/><circle cx="2.700" cy="2.900" r="0.900" fill="#fff"/><path d="M6.200.800h.9l4.500 4.900c.4.400.4 1 0 1.400l-3.600 3.800" fill="none" stroke="#c9c9c9" stroke-width="0.900"/></svg>
<div class="t" style="left:553.38px;top:596px;font-size:14px;color:#444">-</div>
<div class="t" style="left:839.18px;top:596px;font-size:14px;color:#444">-</div>
<svg class="abs" style="left:1262.1px;top:598.9px" width="11" height="10" viewBox="0 0 11 10" fill="#cdcdcd"><rect x="0" y="0.300" width="11" height="1.500"/><rect x="0" y="4.100" width="11" height="1.500"/><rect x="0" y="7.900" width="11" height="1.500"/></svg>
</div>
</div>
<div id="lb"></div>
<div id="corner"></div>
<div id="edge"></div>
</body>
</html>
